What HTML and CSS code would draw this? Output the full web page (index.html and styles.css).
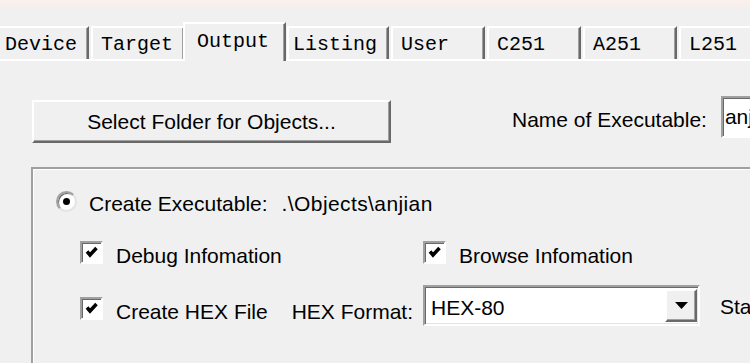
FILE: index.html
```html
<!DOCTYPE html>
<html lang="en">
<head>
    <meta charset="UTF-8">
    <meta name="viewport" content="width=device-width, initial-scale=1.0">
    <title>Options for Target - Output</title>
    <link rel="stylesheet" href="styles.css">
</head>
<body>
    <div class="titlebar"></div>
    <div class="tabs" role="tablist">
        <div class="tab" role="tab">Device</div>
        <div class="tab" role="tab">Target</div>
        <div class="tab tab-active" role="tab" aria-selected="true">Output</div>
        <div class="tab tab-wide" role="tab">Listing</div>
        <div class="tab" role="tab">User</div>
        <div class="tab" role="tab">C251</div>
        <div class="tab" role="tab">A251</div>
        <div class="tab" role="tab">L251</div>
    </div>
    <div class="panel" role="tabpanel">
        <div class="top-row">
            <button type="button" class="btn-folder">Select Folder for Objects...</button>
            <label class="name-label" for="exe-name">Name of Executable:</label>
            <input type="text" id="exe-name" class="text-input" value="anjian">
        </div>
        <div class="group">
            <div class="radio-row">
                <span class="radio"><span class="radio-dot"></span></span>
                <span class="label radio-label">Create Executable:</span>
                <span class="label path">.\Objects\anjian</span>
            </div>
            <div class="opt-row opt-row-info">
                <div class="opt">
                    <span class="check">
                        <svg width="19" height="19" viewBox="0 0 19 19"><polyline points="5,8.5 8,12 14.5,5" fill="none" stroke="#000" stroke-width="3.5"/></svg>
                    </span>
                    <span class="label check-label">Debug Infomation</span>
                </div>
                <div class="opt">
                    <span class="check">
                        <svg width="19" height="19" viewBox="0 0 19 19"><polyline points="5,8.5 8,12 14.5,5" fill="none" stroke="#000" stroke-width="3.5"/></svg>
                    </span>
                    <span class="label check-label">Browse Infomation</span>
                </div>
            </div>
            <div class="opt-row opt-row-hex">
                <div class="opt">
                    <span class="check check-low">
                        <svg width="19" height="19" viewBox="0 0 19 19"><polyline points="5,8.5 8,12 14.5,5" fill="none" stroke="#000" stroke-width="3.5"/></svg>
                    </span>
                    <span class="label check-label hex-label">Create HEX File</span>
                    <span class="label hex-label hex-format">HEX Format:</span>
                </div>
                <div class="combo">
                    <span class="label combo-value">HEX-80</span>
                    <span class="combo-btn">
                        <svg width="13" height="7" viewBox="0 0 13 7"><polygon points="0,0 13,0 6.5,7" fill="#000"/></svg>
                    </span>
                </div>
                <span class="label start-label">Start:</span>
            </div>
        </div>
    </div>
</body>
</html>
```

FILE: styles.css
```css
body {
    margin: 0;
    padding: 0;
    background: #f0f0f0;
    color: #000;
    font-family: "Liberation Sans", Arial, sans-serif;
    font-size: 21px;
    width: 750px;
    height: 363px;
    overflow: hidden;
}

.titlebar {
    height: 10px;
    background: linear-gradient(#fbf0ec, #f6efec 70%, #f0f0f0);
}

/* tab strip */
.tabs {
    display: flex;
    align-items: flex-end;
    height: 37px;
    margin: 12px 0 0 -7px;
}

.tab {
    flex: none;
    box-sizing: border-box;
    width: 94px;
    height: 33px;
    margin-left: 2px;
    padding: 7px 0 0 8px;
    border-top: 2px solid #fff;
    border-left: 2px solid #fff;
    border-right: 2px solid #696969;
    box-shadow: inset -1px 0 0 #a0a0a0;
    font-family: "Liberation Mono", "Courier New", monospace;
    font-size: 20px;
    line-height: 20px;
    white-space: nowrap;
}

.tab-active {
    position: relative;
    z-index: 1;
    width: 103px;
    height: 39px;
    margin: 0 -1px -2px -2px;
    padding: 8px 0 0 12px;
    background: #f0f0f0;
}

.tab-wide {
    width: 102px;
    padding-left: 4px;
}

.panel {
    border-top: 2px solid #fff;
    padding: 35px 0 0 32px;
}

.label {
    line-height: 24px;
    white-space: nowrap;
}

/* first row */
.top-row {
    display: flex;
    align-items: flex-start;
}

.btn-folder {
    flex: none;
    box-sizing: border-box;
    width: 359px;
    height: 43px;
    margin-top: 4px;
    padding: 0;
    background: #f0f0f0;
    border: 2px solid;
    border-color: #fff #696969 #696969 #fff;
    box-shadow: inset -1px -1px 0 #a0a0a0;
    font-family: "Liberation Sans", Arial, sans-serif;
    font-size: 21px;
    line-height: 24px;
    color: #000;
}

.name-label {
    margin: 12px 0 0 121px;
    line-height: 24px;
    white-space: nowrap;
}

.text-input {
    flex: none;
    box-sizing: border-box;
    width: 80px;
    height: 42px;
    margin-left: 14px;
    padding: 0 0 0 2px;
    border: 2px solid;
    border-color: #a0a0a0 #fff #fff #a0a0a0;
    box-shadow: inset 1px 1px 0 #696969;
    background: #fff;
    font-family: "Liberation Sans", Arial, sans-serif;
    font-size: 21px;
    color: #000;
    outline: none;
}

/* group box */
.group {
    height: 240px;
    margin: 24px 0 0 -1px;
    padding-top: 22px;
    border-top: 2px solid #a0a0a0;
    border-left: 2px solid #a0a0a0;
    box-shadow: inset 1px 1px 0 #fff;
}

.radio-row {
    display: flex;
    align-items: flex-start;
    padding-left: 23px;
}

.radio {
    display: flex;
    align-items: center;
    justify-content: center;
    box-sizing: border-box;
    width: 21px;
    height: 21px;
    border-radius: 50%;
    border: 2px solid;
    border-color: #a0a0a0 #e3e3e3 #e3e3e3 #a0a0a0;
    box-shadow: inset 1px 1px 0 #696969;
    background: #fff;
}

.radio-dot {
    width: 7px;
    height: 7px;
    border-radius: 50%;
    background: #000;
}

.radio-label {
    margin: 1px 0 0 12px;
}

.path {
    margin: 1px 0 0 14px;
    letter-spacing: 0.4px;
}

.opt-row {
    display: grid;
    grid-template-columns: 343px 277px auto;
    align-items: start;
    padding-left: 47px;
}

.opt-row-info {
    margin-top: 25px;
}

.opt-row-hex {
    margin-top: 17px;
}

.opt {
    display: flex;
    align-items: flex-start;
}

.check {
    flex: none;
    box-sizing: border-box;
    width: 23px;
    height: 23px;
    border: 2px solid;
    border-color: #a0a0a0 #fff #fff #a0a0a0;
    box-shadow: inset 1px 1px 0 #696969;
    background: #fff;
}

.check svg {
    display: block;
}

.check-low {
    margin-top: 12px;
}

.check-label {
    margin: 3px 0 0 13px;
}

.hex-label {
    margin-top: 15px;
}

.hex-format {
    margin-left: auto;
    margin-right: 10px;
}

/* combo box */
.combo {
    display: flex;
    align-items: flex-start;
    box-sizing: border-box;
    width: 277px;
    height: 41px;
    border: 2px solid;
    border-color: #a0a0a0 #fff #fff #a0a0a0;
    box-shadow: inset 1px 1px 0 #696969, inset -1px -1px 0 #e3e3e3;
    background: #fff;
}

.combo-value {
    flex: 1;
    margin: 9px 0 0 6px;
}

.combo-btn {
    display: flex;
    align-items: center;
    justify-content: center;
    box-sizing: border-box;
    width: 32px;
    height: 33px;
    margin: 2px 1px 0 0;
    border: 2px solid;
    border-color: #fff #696969 #696969 #fff;
    box-shadow: inset -1px -1px 0 #a0a0a0;
    background: #f0f0f0;
}

.start-label {
    margin: 10px 0 0 20px;
}
```
